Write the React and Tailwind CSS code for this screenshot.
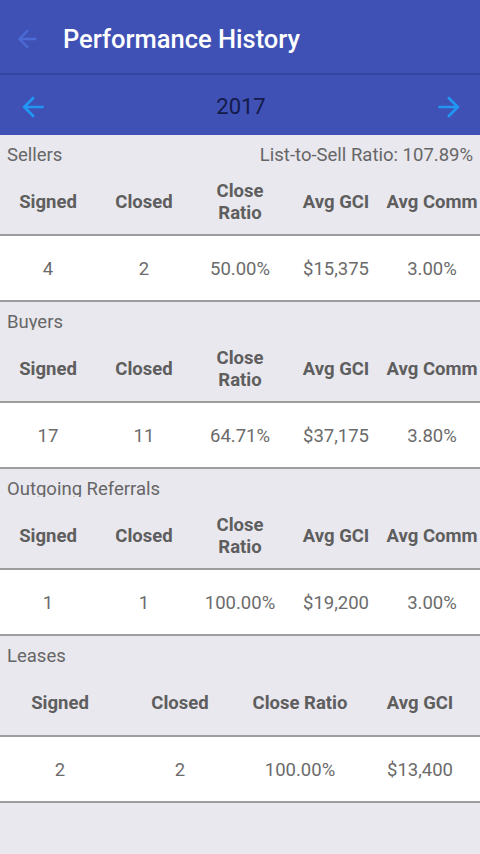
import React from "react";

function ArrowBack({ size, className }) {
  return (
    <svg width={size} height={size} viewBox="0 0 24 24" className={className} fill="currentColor">
      <path d="M20 11H7.83l5.59-5.59L12 4l-8 8 8 8 1.41-1.41L7.83 13H20v-2z" />
    </svg>
  );
}

function ArrowForward({ size, className }) {
  return (
    <svg width={size} height={size} viewBox="0 0 24 24" className={className} fill="currentColor">
      <path d="M12 4l-1.41 1.41L16.17 11H4v2h12.17l-5.58 5.59L12 20l8-8z" />
    </svg>
  );
}

function Section({ label, clip, right, cols, headers, values }) {
  const grid = cols === 5 ? "grid-cols-5" : "grid-cols-4";
  return (
    <div>
      <div className="h-[35px] flex justify-between px-[7px] pt-[10px] text-[18.5px] text-[#666666]">
        {clip ? (
          <div className="h-[17.5px] leading-[21px] overflow-hidden">{label}</div>
        ) : (
          <div className="leading-[21px]">{label}</div>
        )}
        {right ? <div className="leading-[21px]">{right}</div> : null}
      </div>
      <div className={`h-[64px] grid ${grid} items-center text-center font-bold text-[18.5px] leading-[22px] text-[#5e5e5e] whitespace-pre-line`}>
        {headers.map((h, i) => (
          <div key={i}>{h}</div>
        ))}
      </div>
      <div className="h-[2px] bg-[#9d9d9d]" />
      <div className={`h-[64px] bg-white grid ${grid} items-center pt-[3px] text-center text-[18.5px] text-[#6b6b6b]`}>
        {values.map((v, i) => (
          <div key={i}>{v}</div>
        ))}
      </div>
      <div className="h-[2px] bg-[#9d9d9d]" />
    </div>
  );
}

export default function App() {
  const five = ["Signed", "Closed", "Close\nRatio", "Avg GCI", "Avg Comm"];
  return (
    <div className="w-[480px] h-[854px] overflow-hidden bg-[#e9e8ee] font-['Roboto',sans-serif]">
      <div className="h-[73px] bg-[#3f51b5] flex items-center pt-[5px]">
        <ArrowBack size={28} className="ml-[13px] text-[#4c6bd6]" />
        <div className="ml-[22px] text-[25.5px] font-medium text-white">Performance History</div>
      </div>
      <div className="h-[2px] bg-[#3344a2]" />
      <div className="h-[60px] bg-[#3f51b5] flex items-center justify-between pl-[17px] pr-[15px] pt-[3px]">
        <ArrowBack size={32} className="text-[#2196f3]" />
        <div className="text-[22px] text-[#141a4a]">2017</div>
        <ArrowForward size={32} className="text-[#2196f3]" />
      </div>
      <Section
        label="Sellers"
        right="List-to-Sell Ratio: 107.89%"
        cols={5}
        headers={five}
        values={["4", "2", "50.00%", "$15,375", "3.00%"]}
      />
      <Section
        label="Buyers"
        clip
        cols={5}
        headers={five}
        values={["17", "11", "64.71%", "$37,175", "3.80%"]}
      />
      <Section
        label="Outgoing Referrals"
        clip
        cols={5}
        headers={five}
        values={["1", "1", "100.00%", "$19,200", "3.00%"]}
      />
      <Section
        label="Leases"
        cols={4}
        headers={["Signed", "Closed", "Close Ratio", "Avg GCI"]}
        values={["2", "2", "100.00%", "$13,400"]}
      />
    </div>
  );
}
